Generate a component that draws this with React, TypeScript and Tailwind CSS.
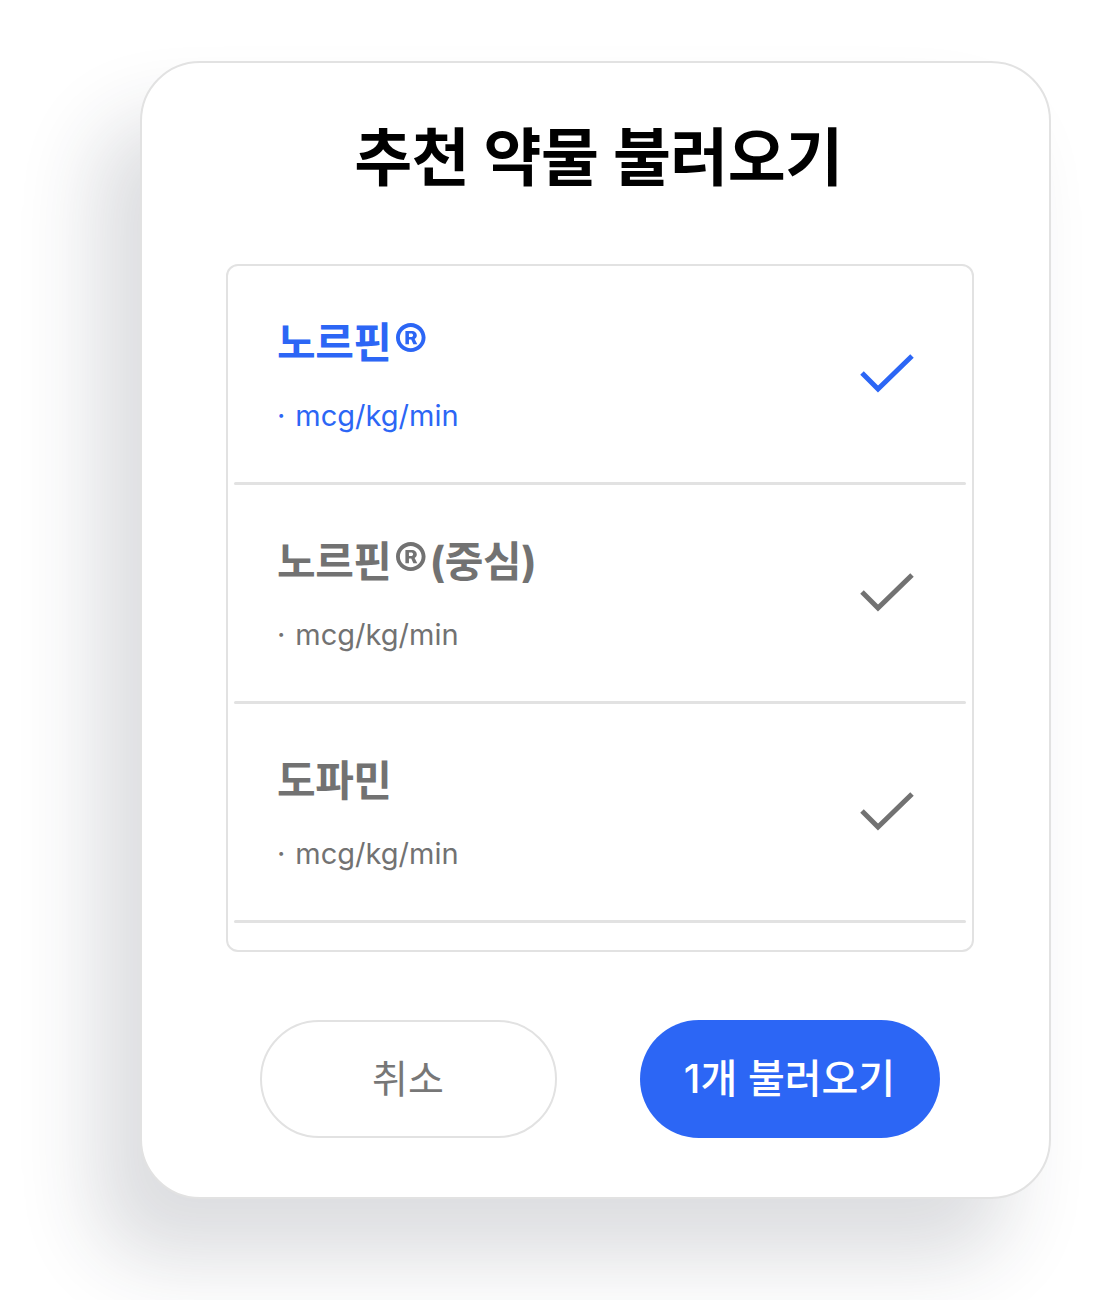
const drugs = [
  { name: "노르핀", reg: true, extra: "", unit: "mcg/kg/min", selected: true },
  { name: "노르핀", reg: true, extra: "(중심)", unit: "mcg/kg/min", selected: false },
  { name: "도파민", reg: false, extra: "", unit: "mcg/kg/min", selected: false },
  { name: "도부타민", reg: false, extra: "", unit: "mcg/kg/min", selected: false },
];

function Check({ color }: { color: string }) {
  return (
    <svg width="56" height="44" viewBox="0 0 56 44" fill="none">
      <path d="M3 21 L19 37 L53 4" stroke={color} strokeWidth="5" strokeLinecap="butt" strokeLinejoin="miter" />
    </svg>
  );
}

export default function App() {
  return (
    <div
      className="w-[1110px] h-[1300px] bg-white overflow-hidden pt-[61px] pl-[140px]"
      style={{ fontFamily: 'Inter, "Noto Sans CJK KR", sans-serif' }}
    >
      <div className="w-[911px] h-[1138px] bg-white border-2 border-[#e2e2e2] rounded-[60px] shadow-[-44px_60px_80px_rgba(40,45,60,0.16)] pt-[57px] flex flex-col">
        <h1 className="text-center text-[63px] leading-[74px] font-bold text-black tracking-[-0.5px] ml-[6px]">
          추천 약물 불러오기
        </h1>

        <div className="mt-[70px] ml-[84px] w-[748px] h-[688px] border-2 border-[#e2e2e2] rounded-[12px] overflow-hidden">
          {drugs.map((d, i) => {
            const color = d.selected ? "#2c66f5" : "#727272";
            return (
              <div key={i} className="px-[6px]">
                <div className="h-[216px] flex items-center pl-[43px] pr-[51px]">
                  <div className="flex-1 pt-[4px]">
                    <div
                      className="h-[50px] flex items-center text-[42px] leading-[50px] font-bold tracking-[-0.5px] whitespace-nowrap"
                      style={{ color }}
                    >
                      <span>{d.name}</span>
                      {d.reg && <span className="text-[52px] leading-[50px] ml-[2px]">®</span>}
                      {d.extra && <span className="ml-[2px]">{d.extra}</span>}
                    </div>
                    <div className="mt-[30px] text-[29px] leading-[36px] whitespace-nowrap" style={{ color }}>
                      <span className="mr-[10px]">·</span>
                      {d.unit}
                    </div>
                  </div>
                  <Check color={color} />
                </div>
                <div className="h-[3px] bg-[#e2e2e2] rounded-full" />
              </div>
            );
          })}
        </div>

        <div className="mt-[68px] flex justify-center gap-[83px] ml-[8px]">
          <button className="w-[297px] h-[118px] rounded-full border-2 border-[#e2e2e2] bg-white text-[39px] leading-[48px] text-[#777777]">
            취소
          </button>
          <button className="w-[300px] h-[118px] rounded-full bg-[#2c66f5] text-[40px] leading-[48px] text-white font-medium">
            1개 불러오기
          </button>
        </div>
      </div>
    </div>
  );
}
